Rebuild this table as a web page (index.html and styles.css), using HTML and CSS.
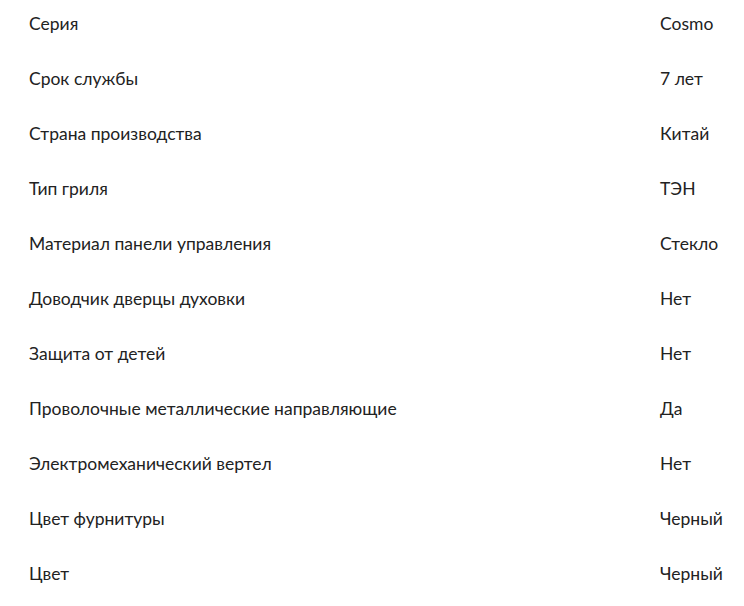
FILE: index.html
```html
<!DOCTYPE html>
<html lang="ru">
<head>
<meta charset="utf-8">
<link rel="stylesheet" href="styles.css">
</head>
<body>
<dl class="specs">
  <div class="row"><dt>Серия</dt><dd>Cosmo</dd></div>
  <div class="row"><dt>Срок службы</dt><dd>7 лет</dd></div>
  <div class="row"><dt>Страна производства</dt><dd>Китай</dd></div>
  <div class="row"><dt>Тип гриля</dt><dd>ТЭН</dd></div>
  <div class="row"><dt>Материал панели управления</dt><dd>Стекло</dd></div>
  <div class="row"><dt>Доводчик дверцы духовки</dt><dd>Нет</dd></div>
  <div class="row"><dt>Защита от детей</dt><dd>Нет</dd></div>
  <div class="row"><dt>Проволочные металлические направляющие</dt><dd>Да</dd></div>
  <div class="row"><dt>Электромеханический вертел</dt><dd>Нет</dd></div>
  <div class="row"><dt>Цвет фурнитуры</dt><dd>Черный</dd></div>
  <div class="row"><dt>Цвет</dt><dd>Черный</dd></div>
</dl>
</body>
</html>
```
FILE: styles.css
```css
html, body {
  margin: 0;
  padding: 0;
  background: #fff;
}
.specs {
  margin: -4px 0 0;
  padding: 0 0 0 29px;
  font-family: "Lato", "Open Sans", sans-serif;
  font-size: 17.5px;
  color: #222;
}
.row {
  display: grid;
  grid-template-columns: 631px 1fr;
  height: 55px;
  align-items: center;
}
.row dt, .row dd {
  margin: 0;
  line-height: 24px;
}
```
